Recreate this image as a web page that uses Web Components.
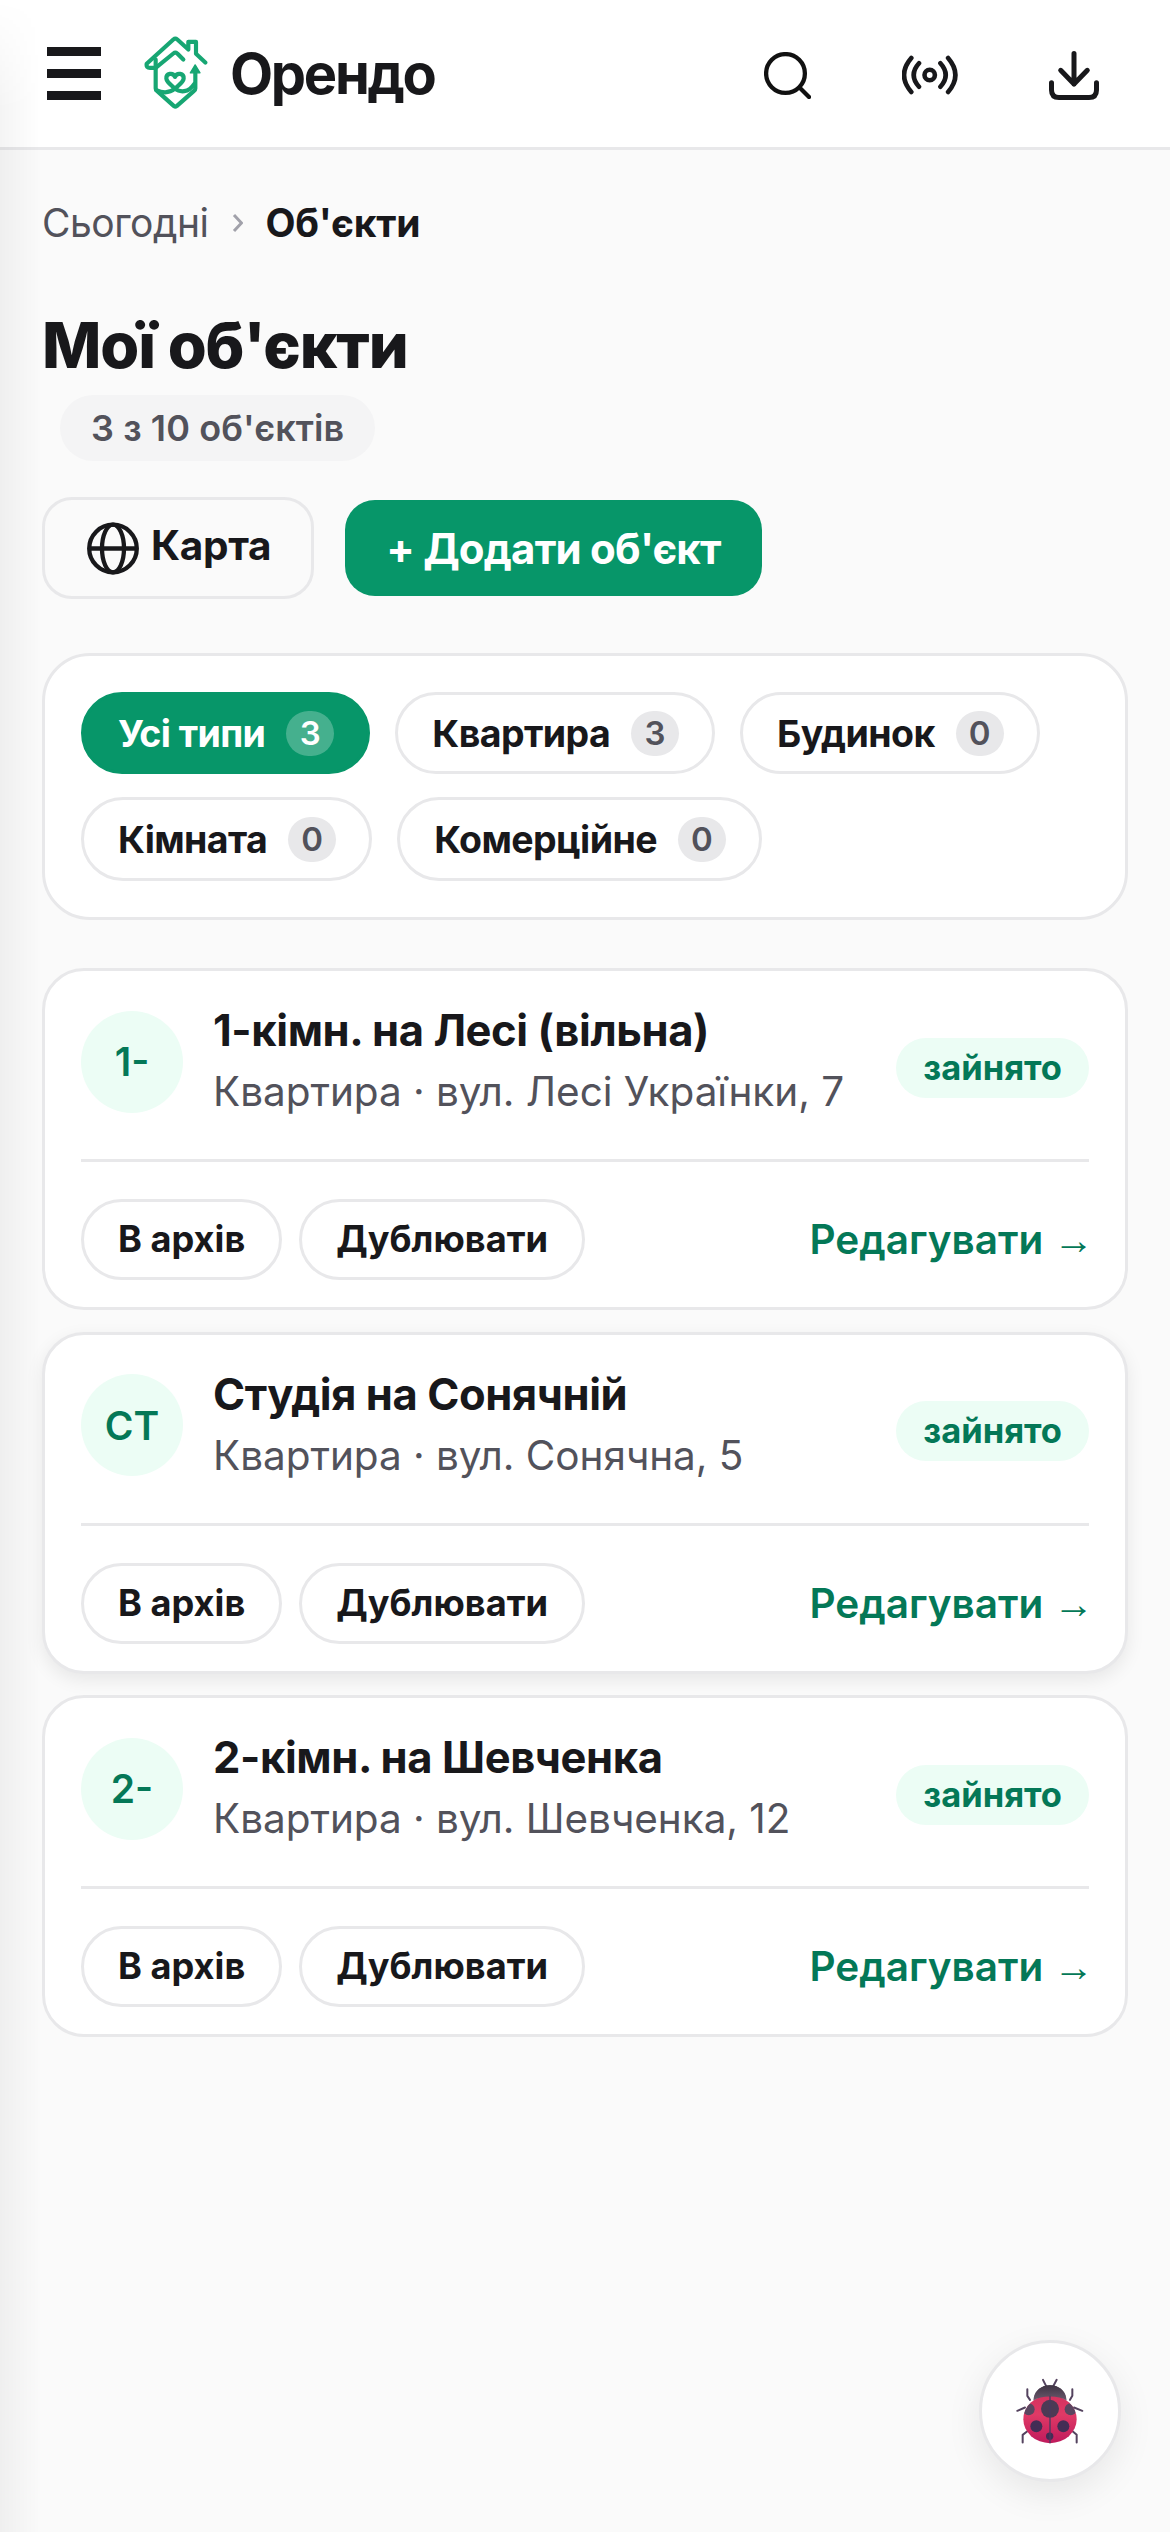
<!DOCTYPE html>
<html lang="uk">
<head>
<meta charset="utf-8">
<title>Орендо</title>
<style>
	html, body { margin: 0; padding: 0; }
	body { background: #fafafa; color: #18181b; font-family: Inter, "Noto Sans", sans-serif; min-height: 2532px; }
</style>
</head>
<body>
<app-shell>
	<app-header slot="header"></app-header>
	<app-breadcrumb></app-breadcrumb>
	<page-title count="3 з 10 об'єктів">Мої об'єкти</page-title>
	<page-actions></page-actions>
	<type-filter></type-filter>
	<object-list>
		<object-card initials="1-" name="1-кімн. на Лесі (вільна)" meta="Квартира · вул. Лесі Українки, 7"></object-card>
		<object-card initials="СТ" name="Студія на Сонячній" meta="Квартира · вул. Сонячна, 5" raised></object-card>
		<object-card initials="2-" name="2-кімн. на Шевченка" meta="Квартира · вул. Шевченка, 12"></object-card>
	</object-list>
	<bug-button></bug-button>
</app-shell>

<script>
class AppShell extends HTMLElement {
	constructor() {
		super();
		this.attachShadow({ mode: 'open' });
		this.shadowRoot.innerHTML = `
			<style>
				:host { display: block; position: relative; height: 2532px; overflow: hidden; }
				.edge { position: absolute; inset: 0 auto 0 0; width: 40px; background: linear-gradient(to right, rgba(0,0,0,.045), rgba(0,0,0,0)); -webkit-mask-image: linear-gradient(to bottom, transparent, #000 110px); mask-image: linear-gradient(to bottom, transparent, #000 110px); pointer-events: none; }
				main { display: flex; flex-direction: column; }
			</style>
			<slot name="header"></slot>
			<main><slot></slot></main>
			<div class="edge"></div>
		`;
	}
}

class AppHeader extends HTMLElement {
	constructor() {
		super();
		this.attachShadow({ mode: 'open' });
		this.shadowRoot.innerHTML = `
			<style>
				:host { display: flex; align-items: center; height: 147px; background: #fff; border-bottom: 3px solid #e8e8ea; padding: 0 71px 0 47px; }
				.menu { display: flex; flex-direction: column; gap: 13px; width: 54px; flex: none; }
				.menu i { display: block; height: 9px; background: #18181b; }
				.logo { width: 64px; height: 75px; margin: -3px 0 0 43px; flex: none; }
				.brand { font-size: 56px; font-weight: 700; letter-spacing: -2.300px; margin-left: 22px; flex: 1; color: #18181b; }
				.icons { display: flex; align-items: center; gap: 91px; margin-top: 3px; }
				.icons svg { display: block; flex: none; }
			</style>
			<div class="menu"><i></i><i></i><i></i></div>
			<svg class="logo" viewBox="72 45 192 224" fill="none" stroke="#17a673" stroke-width="12.500" stroke-linecap="round" stroke-linejoin="round">
				<path d="M107 143H90q-12 0-10-12L160 58q6-5 12 0L205 88V65h23v36l28 26"/>
				<path d="M107 143 160 100q6-5 12 0L190 118"/>
				<path d="M107 118V205q0 4 4 7L162 258q4 3 8 0L222 212q4-3 4-7V150"/>
				<path d="M165 170c-6-14-27-11-26 5 1 12 16 20 26 30 10-10 25-18 26-30 1-16-20-19-26-5z"/>
				<path d="M165 205c-14 12-34 15-56 5M165 205c14 12 40 14 58-14"/>
				<path d="M211 158h29l-14.500-24z" fill="#17a673" stroke-width="4"/>
			</svg>
			<div class="brand">Орендо</div>
			<div class="icons">
				<svg width="47" height="47" viewBox="0 0 47 47" fill="none" stroke="#111" stroke-width="4.300" stroke-linecap="round"><circle cx="21.500" cy="21.500" r="19.400"/><path d="m36 36 9 9"/></svg>
				<svg width="56" height="40" viewBox="0 0 56 40" fill="none" stroke="#18181b" stroke-width="4.600" stroke-linecap="round"><circle cx="27.700" cy="20" r="5.200"/><path d="M17 8.300Q6.400 20 17 31.700M38.400 8.300Q49 20 38.400 31.700M9.300 3Q-5.300 20 9.300 37M46.100 3Q60.700 20 46.100 37"/></svg>
				<svg width="50" height="49" viewBox="0 0 50 49" fill="none" stroke="#18181b" stroke-width="5" stroke-linecap="round" stroke-linejoin="round"><path d="M25 2.500V33M11.700 19.300 25 33l13.300-13.700M2.500 31.700V39q0 7.500 7.500 7.500h30q7.500 0 7.500-7.500v-7.300"/></svg>
			</div>
		`;
	}
}

class AppBreadcrumb extends HTMLElement {
	constructor() {
		super();
		this.attachShadow({ mode: 'open' });
		this.shadowRoot.innerHTML = `
			<style>
				:host { display: flex; align-items: center; padding: 49px 42px 0; font-size: 39px; line-height: 48px; color: #52525b; }
				span { letter-spacing: -.5px; }
				svg { margin: 0 22px 0 24px; flex: none; }
				b { font-weight: 700; color: #18181b; letter-spacing: -.2px; }
			</style>
			<span>Сьогодні</span>
			<svg width="11" height="20" viewBox="0 0 11 20" fill="none" stroke="#a1a1aa" stroke-width="3"><path d="m2 2 7.500 8L2 18"/></svg>
			<b>Об'єкти</b>
		`;
	}
}

class PageTitle extends HTMLElement {
	constructor() {
		super();
		this.attachShadow({ mode: 'open' });
		this.shadowRoot.innerHTML = `
			<style>
				:host { display: block; padding: 58px 42px 0; }
				h1 { margin: 0; font-size: 63px; line-height: 80px; font-weight: 800; letter-spacing: -1.100px; color: #18181b; }
				span { display: block; width: fit-content; margin: 10px 0 0 18px; padding: 0 31px; height: 66px; line-height: 66px; border-radius: 33px; background: #f4f4f5; color: #52525b; font-size: 36px; font-weight: 600; letter-spacing: .1px; }
			</style>
			<h1><slot></slot></h1>
			<span></span>
		`;
		this.shadowRoot.querySelector('span').textContent = this.getAttribute('count');
	}
}

class PageActions extends HTMLElement {
	constructor() {
		super();
		this.attachShadow({ mode: 'open' });
		this.shadowRoot.innerHTML = `
			<style>
				:host { display: flex; align-items: center; gap: 31px; padding: 36px 42px 0; }
				.map { display: flex; align-items: center; gap: 12px; box-sizing: border-box; width: 272px; height: 102px; padding-left: 42px; border: 3px solid #e8e8ea; border-radius: 30px; font-size: 40.500px; font-weight: 700; letter-spacing: -.3px; color: #18181b; }
				.map span { margin-top: -5px; }
				.map svg { flex: none; }
				.add { display: flex; align-items: center; justify-content: center; width: 417px; height: 96px; border-radius: 30px; background: #079669; color: #fff; font-size: 42px; font-weight: 700; letter-spacing: -.8px; }
			</style>
			<div class="map">
				<svg width="52" height="53" viewBox="0 0 52 53" fill="none" stroke="#18181b" stroke-width="4.300"><circle cx="26" cy="26.500" r="23.800"/><ellipse cx="26" cy="26.500" rx="11" ry="23.800"/><path d="M2 26.500h48"/></svg>
				<span>Карта</span>
			</div>
			<div class="add">+ Додати об'єкт</div>
		`;
	}
}

class TypeFilter extends HTMLElement {
	constructor() {
		super();
		this.attachShadow({ mode: 'open' });
		const items = [['Усі типи', 3, true], ['Квартира', 3], ['Будинок', 0], ['Кімната', 0], ['Комерційне', 0]];
		this.shadowRoot.innerHTML = `
			<style>
				:host { display: flex; flex-wrap: wrap; gap: 23px 25px; align-content: flex-start; margin: 54px 42px 0; padding: 36px; box-sizing: border-box; height: 267px; background: #fff; border: 3px solid #e8e8ea; border-radius: 48px; }
				.chip { display: flex; align-items: center; gap: 21px; box-sizing: border-box; height: 82px; padding: 0 33px 0 34px; border: 3px solid #e8e8ea; border-radius: 42px; font-size: 37.500px; font-weight: 700; letter-spacing: -.6px; color: #18181b; }
				.chip:nth-child(n+5) { height: 84px; }
				.chip.on { background: #079669; border-color: #079669; color: #fff; }
				.chip b { display: flex; align-items: center; justify-content: center; min-width: 48px; height: 45px; border-radius: 23px; background: #e8e8ea; color: #52525b; font-size: 33px; font-weight: 600; letter-spacing: 0; }
				.chip.on b { background: rgba(255,255,255,.25); color: #fff; }
			</style>
			${items.map(([label, n, on]) => `<div class="chip${on ? ' on' : ''}">${label}<b>${n}</b></div>`).join('')}
		`;
	}
}

class ObjectList extends HTMLElement {
	constructor() {
		super();
		this.attachShadow({ mode: 'open' });
		this.shadowRoot.innerHTML = `
			<style>:host { display: flex; flex-direction: column; gap: 21.500px; margin: 48px 42px 0; }</style>
			<slot></slot>
		`;
	}
}

class ObjectCard extends HTMLElement {
	constructor() {
		super();
		this.attachShadow({ mode: 'open' });
		this.shadowRoot.innerHTML = `
			<style>
				:host { display: block; box-sizing: border-box; height: 342px; background: #fff; border: 3px solid #e8e8ea; border-radius: 42px; padding: 0 36px; }
				:host([raised]) { box-shadow: 0 6px 18px rgba(0,0,0,.08); }
				.top { display: flex; align-items: center; padding: 29px 0 36px; border-bottom: 3px solid #e8e8ea; }
				.ava { display: flex; align-items: center; justify-content: center; flex: none; width: 102px; height: 102px; border-radius: 50%; background: #ecfdf5; color: #047857; font-size: 39px; font-weight: 600; }
				.info { flex: 1; margin-left: 30px; }
				.name { font-size: 43.500px; line-height: 60px; font-weight: 700; letter-spacing: -.4px; color: #18181b; }
				.meta { font-size: 40.500px; line-height: 63px; letter-spacing: -.05px; color: #52525b; }
				.status { flex: none; height: 60px; line-height: 60px; padding: 0 27px; margin-top: 12px; border-radius: 30px; background: #ecfdf5; color: #047857; font-size: 34.500px; font-weight: 700; }
				.bottom { display: flex; align-items: center; gap: 17px; padding-top: 37px; }
				.btn { box-sizing: border-box; height: 81px; line-height: 75px; padding: 0 34px; border: 3px solid #e8e8ea; border-radius: 41px; font-size: 36.200px; font-weight: 700; color: #18181b; }
				.edit { margin-left: auto; margin-right: -5px; font-size: 40.500px; font-weight: 600; color: #047857; white-space: nowrap; }
				.edit span { font-family: "Liberation Sans", sans-serif; font-weight: 700; }
			</style>
			<div class="top">
				<div class="ava"></div>
				<div class="info"><div class="name"></div><div class="meta"></div></div>
				<div class="status">зайнято</div>
			</div>
			<div class="bottom">
				<div class="btn">В архів</div>
				<div class="btn">Дублювати</div>
				<div class="edit">Редагувати <span>→</span></div>
			</div>
		`;
		this.shadowRoot.querySelector('.ava').textContent = this.getAttribute('initials');
		this.shadowRoot.querySelector('.name').textContent = this.getAttribute('name');
		this.shadowRoot.querySelector('.meta').textContent = this.getAttribute('meta');
	}
}

class BugButton extends HTMLElement {
	constructor() {
		super();
		this.attachShadow({ mode: 'open' });
		this.shadowRoot.innerHTML = `
			<style>
				:host { position: absolute; left: 979px; top: 2340px; display: flex; align-items: center; justify-content: center; box-sizing: border-box; width: 142px; height: 142px; border-radius: 50%; background: #fff; border: 3px solid #e8e8ea; box-shadow: 0 12px 36px rgba(0,0,0,.08); }
			</style>
			<svg width="70" height="67" viewBox="195 205 210 200" fill="none">
				<defs>
					<linearGradient id="shell" x1="0" y1="0" x2="0" y2="1"><stop offset="0" stop-color="#d4325f"/><stop offset=".4" stop-color="#e03a66"/><stop offset="1" stop-color="#bf1a5c"/></linearGradient>
					<linearGradient id="head" x1="0" y1="0" x2="0" y2="1"><stop offset="0" stop-color="#3e3344"/><stop offset="1" stop-color="#6b5a6c"/></linearGradient>
					<clipPath id="body"><ellipse cx="300" cy="328" rx="80" ry="72"/></clipPath>
				</defs>
				<g stroke="#54435f" stroke-width="6" stroke-linecap="round" stroke-linejoin="round">
					<path d="M290 232 279 210M308 232l12-22"/>
					<path d="M240 270l-8-12v-20M360 270l7-12v-20"/>
					<path d="M225 293l-23 10M372 293l25 10"/>
					<path d="M235 362l-17 13v23M365 362l15 13v23"/>
				</g>
				<path d="M252 264c2-24 24-38 48-38s46 14 48 38z" fill="url(#head)"/>
				<ellipse cx="300" cy="328" rx="80" ry="72" fill="url(#shell)"/>
				<path d="M250 272c12-8 30-12 50-12s38 4 50 12c-2-28-24-46-50-46s-48 18-50 46z" fill="url(#head)"/>
				<g clip-path="url(#body)">
					<circle cx="236" cy="298" r="18" fill="#5a4660"/>
					<circle cx="362" cy="298" r="18" fill="#5a4660"/>
				</g>
				<circle cx="300" cy="297" r="27" fill="#4c3a55"/>
				<g fill="#432d55">
					<circle cx="259" cy="349" r="18"/>
					<circle cx="340" cy="349" r="18"/>
					<circle cx="299" cy="379" r="11"/>
				</g>
				<path d="M300 258v142" stroke="#4a3a60" stroke-width="4"/>
			</svg>
		`;
	}
}

customElements.define('app-shell', AppShell);
customElements.define('app-header', AppHeader);
customElements.define('app-breadcrumb', AppBreadcrumb);
customElements.define('page-title', PageTitle);
customElements.define('page-actions', PageActions);
customElements.define('type-filter', TypeFilter);
customElements.define('object-list', ObjectList);
customElements.define('object-card', ObjectCard);
customElements.define('bug-button', BugButton);
</script>
</body>
</html>
